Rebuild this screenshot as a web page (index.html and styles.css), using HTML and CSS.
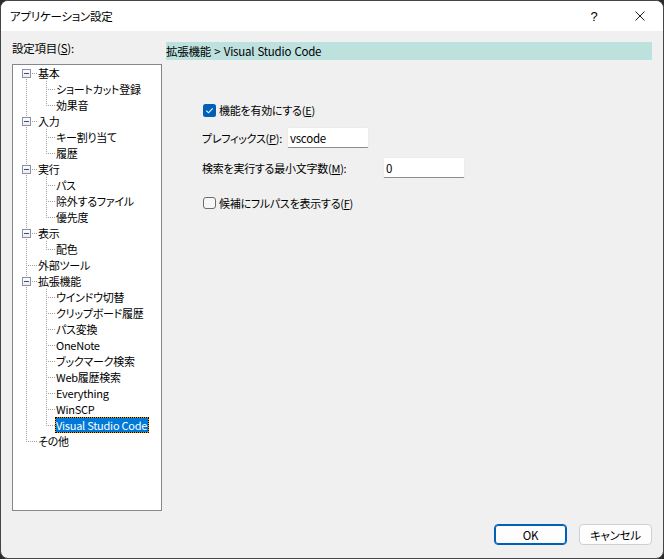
FILE: index.html
```html
<!DOCTYPE html>
<html lang="ja">
<head>
<meta charset="utf-8">
<title>アプリケーション設定</title>
<link rel="stylesheet" href="styles.css">
</head>
<body>
<div class="window">
  <div class="titlebar">
    <span class="title">アプリケーション設定</span>
    <span class="cap-btn help">?</span>
    <span class="cap-btn close"><svg width="10" height="10" viewBox="0 0 10 10"><path d="M0.5 0.5 L9.5 9.5 M9.5 0.5 L0.5 9.5" stroke="#1a1a1a" stroke-width="1" fill="none"/></svg></span>
  </div>
  <div class="body">
    <div class="main">
      <div class="left">
        <div class="tree-label">設定項目(<u>S</u>):</div>
        <div class="tree">
          <div class="row parent first"><span class="box"><span class="minus"></span></span><span class="t">基本</span></div>
          <div class="row child"><span class="t">ショートカット登録</span></div>
          <div class="row child last"><span class="t">効果音</span></div>
          <div class="row parent"><span class="box"><span class="minus"></span></span><span class="t">入力</span></div>
          <div class="row child"><span class="t">キー割り当て</span></div>
          <div class="row child last"><span class="t">履歴</span></div>
          <div class="row parent"><span class="box"><span class="minus"></span></span><span class="t">実行</span></div>
          <div class="row child"><span class="t">パス</span></div>
          <div class="row child"><span class="t">除外するファイル</span></div>
          <div class="row child last"><span class="t">優先度</span></div>
          <div class="row parent"><span class="box"><span class="minus"></span></span><span class="t">表示</span></div>
          <div class="row child last"><span class="t">配色</span></div>
          <div class="row leaf"><span class="t">外部ツール</span></div>
          <div class="row parent"><span class="box"><span class="minus"></span></span><span class="t">拡張機能</span></div>
          <div class="row child"><span class="t">ウインドウ切替</span></div>
          <div class="row child"><span class="t">クリップボード履歴</span></div>
          <div class="row child"><span class="t">パス変換</span></div>
          <div class="row child"><span class="t">OneNote</span></div>
          <div class="row child"><span class="t">ブックマーク検索</span></div>
          <div class="row child"><span class="t">Web履歴検索</span></div>
          <div class="row child"><span class="t">Everything</span></div>
          <div class="row child"><span class="t">WinSCP</span></div>
          <div class="row child last"><span class="t sel">Visual Studio Code</span></div>
          <div class="row leaf last"><span class="t">その他</span></div>
        </div>
      </div>
      <div class="right">
        <div class="crumb">拡張機能 &gt; Visual Studio Code</div>
        <div class="form">
          <div class="check-row">
            <span class="cb checked"><svg width="13" height="13" viewBox="0 0 13 13"><rect x="0" y="0" width="13" height="13" rx="2.5" fill="#005fb8"/><path d="M3.3 6.7 L5.5 8.8 L9.7 4.4" stroke="#fff" stroke-width="1.1" fill="none"/></svg></span>
            <span class="ct">機能を有効にする(<u>E</u>)</span>
          </div>
          <div class="field-row">
            <span class="lbl lbl-prefix">プレフィックス(<u>P</u>):</span>
            <input class="edit" type="text" value="vscode">
          </div>
          <div class="field-row">
            <span class="lbl lbl-min">検索を実行する最小文字数(<u>M</u>):</span>
            <input class="edit" type="text" value="0">
          </div>
          <div class="check-row second">
            <span class="cb"></span>
            <span class="ct">候補にフルパスを表示する(<u>F</u>)</span>
          </div>
        </div>
      </div>
    </div>
    <div class="footer">
      <button class="btn default">OK</button>
      <button class="btn">キャンセル</button>
    </div>
  </div>
</div>
</body>
</html>
```

FILE: styles.css
```css
html, body {
  margin: 0;
  padding: 0;
  background: #2b2b2b;
}
body {
  width: 664px;
  height: 559px;
  overflow: hidden;
  font-family: "Noto Sans CJK JP", "Noto Sans", sans-serif;
  font-size: 11px;
  letter-spacing: -0.25px;
  font-feature-settings: "palt";
  color: #000;
}
u {
  text-decoration: underline;
  text-underline-offset: 1px;
}
.window {
  box-sizing: border-box;
  width: 664px;
  height: 559px;
  border: 1px solid #454545;
  border-radius: 8px;
  background: #f0f0f0;
  overflow: hidden;
  display: flex;
  flex-direction: column;
}
.titlebar {
  flex: none;
  height: 30px;
  background: #ffffff;
  display: flex;
  align-items: center;
}
.title {
  margin-left: 9px;
  line-height: 16px;
  font-size: 11.5px;
}
.cap-btn {
  width: 46px;
  height: 30px;
  display: flex;
  align-items: center;
  justify-content: center;
}
.help {
  margin-left: auto;
  font-size: 13px;
  font-family: "Liberation Sans", sans-serif;
}
.body {
  flex: 1;
  display: flex;
  flex-direction: column;
}
.main {
  display: flex;
  height: 480px;
}
.left {
  width: 150px;
  margin-left: 11px;
}
.tree-label {
  padding-top: 9px;
  height: 16px;
  line-height: 16px;
  margin-bottom: 8px;
  font-size: 11.5px;
}
.tree {
  box-sizing: border-box;
  height: 447px;
  border: 1px solid #828790;
  background: #ffffff;
}
.row {
  height: 16px;
  display: flex;
  align-items: center;
  white-space: nowrap;
  background-repeat: no-repeat;
}
.row .t {
  line-height: 16px;
}
.row.parent {
  background-image:
    repeating-linear-gradient(to bottom, #a0a0a0 0 1px, transparent 1px 2px),
    repeating-linear-gradient(to right, #a0a0a0 0 1px, transparent 1px 2px);
  background-position: 13px 0, 19px 8px;
  background-size: 1px 16px, 6px 1px;
}
.row.parent.first {
  background-position: 13px 8px, 19px 8px;
  background-size: 1px 8px, 6px 1px;
}
.row.leaf {
  background-image:
    repeating-linear-gradient(to bottom, #a0a0a0 0 1px, transparent 1px 2px),
    repeating-linear-gradient(to right, #a0a0a0 0 1px, transparent 1px 2px);
  background-position: 13px 0, 15px 8px;
  background-size: 1px 16px, 10px 1px;
  padding-left: 25px;
}
.row.leaf.last {
  background-size: 1px 9px, 10px 1px;
}
.row.child {
  background-image:
    repeating-linear-gradient(to bottom, #a0a0a0 0 1px, transparent 1px 2px),
    repeating-linear-gradient(to bottom, #a0a0a0 0 1px, transparent 1px 2px),
    repeating-linear-gradient(to right, #a0a0a0 0 1px, transparent 1px 2px);
  background-position: 13px 0, 33px 0, 35px 8px;
  background-size: 1px 16px, 1px 16px, 7px 1px;
  padding-left: 43px;
}
.row.child.last {
  background-size: 1px 16px, 1px 9px, 7px 1px;
}
.box {
  box-sizing: border-box;
  width: 9px;
  height: 9px;
  margin-left: 9px;
  margin-right: 7px;
  border: 1px solid #8e8f9e;
  background: linear-gradient(#ffffff, #ebebef);
  display: flex;
  align-items: center;
  justify-content: center;
}
.minus {
  width: 5px;
  height: 1px;
  background: #2a4e9e;
}
.row .sel {
  box-sizing: border-box;
  height: 16px;
  line-height: 14px;
  margin-left: -1px;
  padding: 0 1px 0 0;
  color: #ffffff;
  border: 1px dotted #000000;
  background:
    linear-gradient(#0078d7, #0078d7) padding-box,
    linear-gradient(#f39200, #f39200) border-box;
}
.right {
  width: 486px;
  margin-left: 4px;
}
.crumb {
  margin-top: 11px;
  height: 18px;
  line-height: 18px;
  background: #bde1dd;
  white-space: pre;
  font-size: 11.5px;
  word-spacing: 1px;
}
.form {
  padding-left: 36px;
  padding-top: 42px;
}
.check-row {
  height: 16px;
  display: flex;
  align-items: flex-start;
  white-space: nowrap;
}
.check-row .ct {
  line-height: 16px;
}
.check-row.second {
  margin-top: 17px;
}
.cb {
  box-sizing: border-box;
  width: 13px;
  height: 13px;
  margin-top: 2px;
  margin-left: 1px;
  margin-right: 3px;
  border: 1px solid #6d6d6d;
  border-radius: 3px;
  background: #f7f7f7;
  flex: none;
}
.check-row.second .cb {
  margin-top: 2px;
  height: 12px;
}
.cb.checked {
  border: none;
  background: none;
}
.cb svg {
  display: block;
}
.field-row {
  height: 21px;
  margin-top: 9px;
  display: flex;
  align-items: center;
}
.lbl {
  flex: none;
  white-space: nowrap;
}
.lbl-prefix {
  width: 85px;
}
.lbl-min {
  width: 181px;
}
.edit {
  box-sizing: border-box;
  width: 82px;
  height: 21px;
  margin: 0;
  padding: 0 3px 0 2px;
  border: 1px solid #ececec;
  border-bottom: 1px solid #8c8c8c;
  border-radius: 2px;
  background: #ffffff;
  font-family: inherit;
  font-size: 11.5px;
  letter-spacing: inherit;
  font-feature-settings: "palt";
  color: #000;
  outline: none;
}
.footer {
  display: flex;
  justify-content: flex-end;
  gap: 12px;
  padding: 13px 11px 0 0;
}
.btn {
  box-sizing: border-box;
  width: 73px;
  height: 21px;
  margin: 0;
  padding: 0;
  border: 1px solid #d0d0d0;
  border-radius: 4px;
  background: #fdfdfd;
  font-family: inherit;
  font-size: 11.5px;
  letter-spacing: inherit;
  font-feature-settings: "palt";
  color: #000;
  line-height: 18px;
}
.btn.default {
  border: 1px solid #005fb8;
  box-shadow: inset 0 0 0 1px #005fb8;
}
```
